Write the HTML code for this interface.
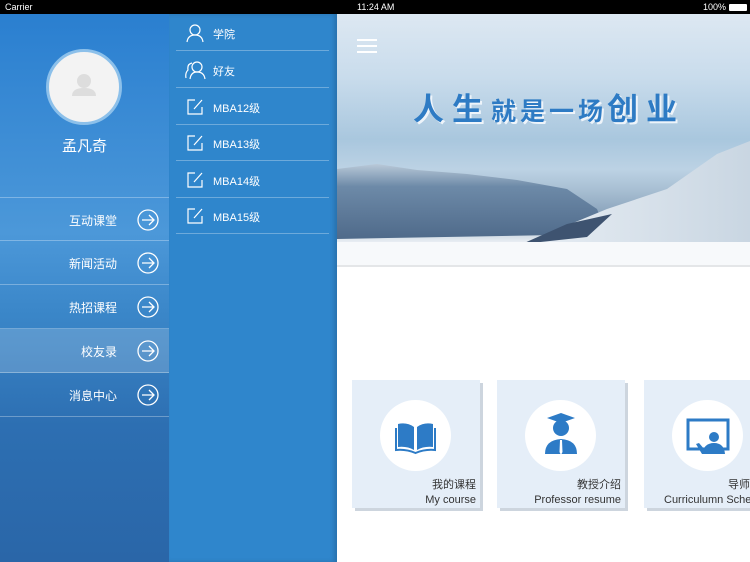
<!DOCTYPE html>
<html><head><meta charset="utf-8"><style>
*{margin:0;padding:0;box-sizing:border-box}
body{width:750px;height:562px;overflow:hidden;position:relative;font-family:"Liberation Sans","Noto Sans CJK SC",sans-serif;background:#fff}
.wrap{position:absolute;left:0;top:0;width:750px;height:562px;overflow:hidden}
.sb{position:absolute;left:0;top:0;width:750px;height:14px;background:#000;color:#fff;font-size:9px;line-height:14px}
.left{position:absolute;left:0;top:14px;width:169px;height:548px;background:linear-gradient(180deg,#2a7fd0 0%,#4c98d9 40%,#3a86c8 55%,#2d6fb2 75%,#2a66a8 100%)}
.mid{position:absolute;left:169px;top:14px;width:168px;height:548px;background:#2f86cc;box-shadow:inset -3px 0 4px rgba(0,0,0,.15)}
.av{position:absolute;left:46px;top:35px;width:76px;height:76px;border-radius:50%;background:#f3f3f3;border:3px solid #8cc0ea}
.name{position:absolute;left:0;width:169px;top:135px;text-align:center;color:#fff;font-size:15px}
.row{position:absolute;left:0;width:169px;height:44px;border-bottom:1px solid rgba(255,255,255,.3);color:#fff;font-size:12px}
.row span{position:absolute;right:52px;top:14px}
.row svg{position:absolute;left:137px;top:11px}
.mi{position:absolute;left:176px;width:153px;height:37px;border-bottom:1px solid rgba(255,255,255,.3);color:#fff;font-size:11px}
.mi span{position:absolute;left:37px;top:12px}
.mi svg{position:absolute;left:9px;top:9px}
.banner{position:absolute;left:337px;top:14px;width:413px;height:253px;background:linear-gradient(180deg,#dde8f2 0%,#c9dcec 25%,#a9c7de 50%,#bcd2e4 62%,#a8bfd3 70%,#8aa3bb 80%,#f3f6f9 92%,#fff 100%);overflow:hidden;border-bottom:2px solid #e4e6e8}
.title{position:absolute;left:76px;top:70px;font-size:31px;font-weight:bold;color:#2e7bc4;letter-spacing:8px;text-shadow:2px 2px 0 #eef4fa;font-family:"Noto Sans CJK SC",sans-serif;white-space:nowrap}
.card{position:absolute;top:380px;width:128px;height:128px;background:#e5eef8;box-shadow:3px 3px 0 #cdd5de}
.card .c{position:absolute;left:28px;top:20px;width:71px;height:71px;border-radius:50%;background:#fff}
.card .t{position:absolute;right:4px;top:98px;text-align:right;font-size:11px;color:#333;line-height:15px;white-space:nowrap}
</style></head><body><div class="wrap">
<div class="sb"><span style="position:absolute;left:5px">Carrier</span><span style="position:absolute;left:357px">11:24 AM</span><span style="position:absolute;right:24px">100%</span><span style="position:absolute;right:3px;top:4px;width:18px;height:7px;background:#fff;border-radius:1px"></span></div>
<div class="left">
 <div class="av"><svg width="70" height="70" viewBox="0 0 70 70"><circle cx="35" cy="29" r="7" fill="#ddd"/><path d="M23 44 Q23 36 35 36 Q47 36 47 44 Z" fill="#ddd"/></svg></div>
</div>
<div class="name">孟凡奇</div>
<div class="row" style="top:197px;border-top:1px solid rgba(255,255,255,.3)"><span>互动课堂</span><svg width="22" height="22" fill="none" stroke="#fff" stroke-width="1.3"><circle cx="11" cy="11" r="10"/><path d="M5 11H17M12 6L17 11L12 16"/></svg></div>
<div class="row" style="top:241px"><span>新闻活动</span><svg width="22" height="22" fill="none" stroke="#fff" stroke-width="1.3"><circle cx="11" cy="11" r="10"/><path d="M5 11H17M12 6L17 11L12 16"/></svg></div>
<div class="row" style="top:285px"><span>热招课程</span><svg width="22" height="22" fill="none" stroke="#fff" stroke-width="1.3"><circle cx="11" cy="11" r="10"/><path d="M5 11H17M12 6L17 11L12 16"/></svg></div>
<div class="row" style="top:329px;background:rgba(255,255,255,.18)"><span>校友录</span><svg width="22" height="22" fill="none" stroke="#fff" stroke-width="1.3"><circle cx="11" cy="11" r="10"/><path d="M5 11H17M12 6L17 11L12 16"/></svg></div>
<div class="row" style="top:373px"><span>消息中心</span><svg width="22" height="22" fill="none" stroke="#fff" stroke-width="1.3"><circle cx="11" cy="11" r="10"/><path d="M5 11H17M12 6L17 11L12 16"/></svg></div>
<div class="mid"></div>
<div class="mi" style="top:14px"><svg width="20" height="20" fill="none" stroke="#fff" stroke-width="1.2"><circle cx="10" cy="7" r="5"/><path d="M2 19 Q3 12 10 12 Q17 12 18 19"/></svg><span>学院</span></div>
<div class="mi" style="top:51px"><svg width="22" height="20" fill="none" stroke="#fff" stroke-width="1.2"><circle cx="12" cy="7" r="5"/><path d="M5 19 Q6 12 12 12 Q19 12 20 19M7 3 Q2 4 3 10 Q0 13 1 18"/></svg><span>好友</span></div>
<div class="mi" style="top:88px"><svg width="20" height="20" fill="none" stroke="#fff" stroke-width="1.2"><path d="M10 3H3V17H17V10M9 12L17 3"/></svg><span>MBA12级</span></div>
<div class="mi" style="top:124px"><svg width="20" height="20" fill="none" stroke="#fff" stroke-width="1.2"><path d="M10 3H3V17H17V10M9 12L17 3"/></svg><span>MBA13级</span></div>
<div class="mi" style="top:161px"><svg width="20" height="20" fill="none" stroke="#fff" stroke-width="1.2"><path d="M10 3H3V17H17V10M9 12L17 3"/></svg><span>MBA14级</span></div>
<div class="mi" style="top:197px"><svg width="20" height="20" fill="none" stroke="#fff" stroke-width="1.2"><path d="M10 3H3V17H17V10M9 12L17 3"/></svg><span>MBA15级</span></div>
<div class="banner">
 <svg style="position:absolute;left:0;top:125px" width="413" height="128"><defs><linearGradient id="g" x1="0" y1="0" x2="0" y2="1"><stop offset="0" stop-color="#b9c9d8"/><stop offset=".3" stop-color="#6d8aa8"/><stop offset="1" stop-color="#4f6a8a"/></linearGradient><linearGradient id="s" x1="0" y1="0" x2="1" y2="0"><stop offset="0" stop-color="#e8eef4"/><stop offset="1" stop-color="#c9d6e2"/></linearGradient></defs><path d="M0 30 L40 25 L80 31 L130 35 L180 41 L230 50 L260 70 L270 95 L0 100Z" fill="url(#g)"/><path d="M185 105 L270 70 L330 50 L380 15 L413 2 L413 110 Z" fill="url(#s)"/><path d="M185 105 L230 85 L275 75 L250 98Z" fill="#3e5370"/><path d="M0 103 L413 103 L413 128 L0 128Z" fill="#f7f9fb"/></svg>
 <div style="position:absolute;left:20px;top:25px;width:20px;height:2px;background:#fff;box-shadow:0 6px 0 #fff,0 12px 0 #fff"></div>
 <div class="title">人生<span style="font-size:25px;letter-spacing:4px">就是一场</span>创业</div>
</div>
<div class="card" style="left:352px"><div class="c"><svg width="71" height="71"><path d="M18 24 Q27 22 34 27 V50 Q27 46 18 47Z M37 27 Q44 22 53 24 V47 Q44 46 37 50Z" fill="#2d7bc6"/><path d="M16 28 V50 Q26 49 35.5 53 Q45 49 55 50 V28" fill="none" stroke="#2d7bc6" stroke-width="2"/></svg></div><div class="t">我的课程<br>My course</div></div>
<div class="card" style="left:497px"><div class="c"><svg width="71" height="71"><path d="M22 18 L36 13 L50 18 L36 23Z" fill="#2d7bc6"/><circle cx="36" cy="28" r="8" fill="#2d7bc6"/><path d="M20 54 Q20 40 36 39 Q52 40 52 54Z" fill="#2d7bc6"/><path d="M35 40 L37 40 L37.5 52 L36 55 L34.5 52Z" fill="#fff"/></svg></div><div class="t">教授介绍<br>Professor resume</div></div>
<div class="card" style="left:644px"><div class="c"><svg width="71" height="71"><rect x="16" y="20" width="40" height="29" fill="none" stroke="#2d7bc6" stroke-width="3"/><circle cx="42" cy="37" r="5" fill="#2d7bc6"/><path d="M30 54 Q32 43 42 43 Q52 43 53 54Z M30 54 L24 44 L27 43 L33 50Z" fill="#2d7bc6"/></svg></div><div style="position:absolute;left:84px;top:98px;font-size:11px;color:#333;white-space:nowrap;line-height:15px">导师介绍</div><div style="position:absolute;left:20px;top:113px;font-size:11px;color:#333;white-space:nowrap;line-height:15px">Curriculumn Schedule</div></div>
</div></body></html>
